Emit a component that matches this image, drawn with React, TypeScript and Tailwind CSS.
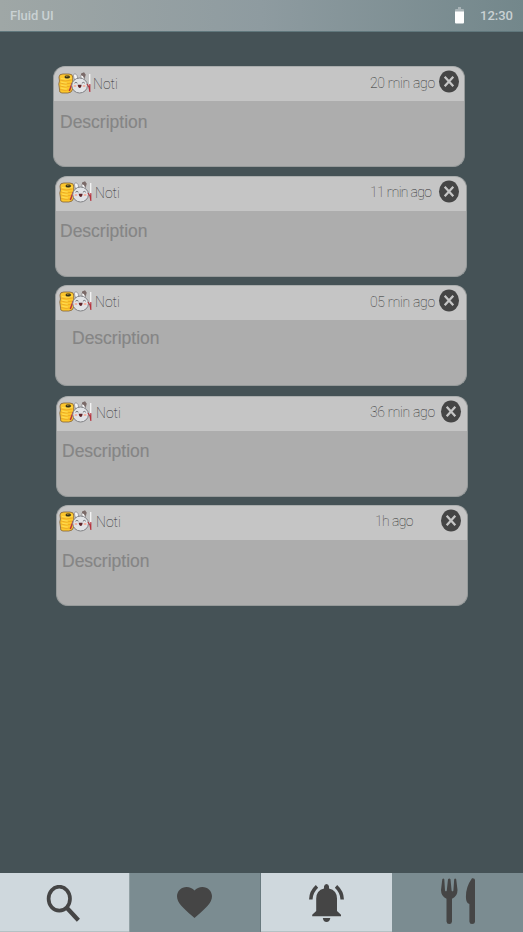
import React from "react";

type Notice = {
  card: string;
  icon: string;
  title: string;
  time: string;
  ago: string;
  close: string;
  body: string;
};

const notices: Notice[] = [
  { card: "ml-[53px]", icon: "ml-[4px] mt-[5px]", title: "ml-[2px] mt-[9px]", time: "ml-[250px] mt-[8px] w-[68px] tracking-[-0.3px]", ago: "20 min ago", close: "mt-[2px]", body: "pl-[6px] pt-[10px]" },
  { card: "ml-[55px] mt-[9px]", icon: "ml-[3px] mt-[4px]", title: "ml-[3px] mt-[8px]", time: "ml-[248px] mt-[7px] w-[68px] tracking-[-0.65px]", ago: "11 min ago", close: "mt-[2px]", body: "pl-[4px] pt-[9px]" },
  { card: "ml-[55px] mt-[8px]", icon: "ml-[3px] mt-[4px]", title: "ml-[3px] mt-[8px]", time: "ml-[248px] mt-[8px] w-[68px] tracking-[-0.3px]", ago: "05 min ago", close: "mt-[2px]", body: "pl-[16px] pt-[7px]" },
  { card: "ml-[56px] mt-[10px]", icon: "ml-[2px] mt-[4px]", title: "ml-[4px] mt-[8px]", time: "ml-[247px] mt-[7px] w-[70px] tracking-[-0.3px]", ago: "36 min ago", close: "mt-[2px]", body: "pl-[5px] pt-[9px]" },
  { card: "ml-[56px] mt-[8px]", icon: "ml-[2px] mt-[4px]", title: "ml-[4px] mt-[8px]", time: "ml-[252px] mt-[7px] w-[65px] tracking-[-0.6px]", ago: "1h ago", close: "mt-[2px]", body: "pl-[5px] pt-[10px]" },
];

function Sticker() {
  return (
    <svg width="33" height="23" viewBox="0 0 33.6 23" preserveAspectRatio="none">
      <path d="M1 5Q1 2 5 2H11Q15 2 15 5V17Q14 21 10 21H4Q1 21 1.5 17L.8 12 1.5 9Z" fill="#fdc72c" stroke="#80603a" strokeWidth=".8" />
      <path d="M2 8q5 2 12 0M2 11q5 2 12 0M2 14q5 2 12 0M2 17.5q5 2 11 0" fill="none" stroke="#e4a021" strokeWidth=".7" />
      <path d="M3 6.5q6 1.5 11-.5M3 10q3 1 6 1M3 13q3 1 6 1M3 16q3 1 6 1" fill="none" stroke="#ffe35e" strokeWidth=".8" />
      <ellipse cx="9.4" cy="4.9" rx="2.8" ry="1.7" fill="#343019" />
      <path d="M8 4.5l1.5-.5 1 .6" stroke="#e6b638" strokeWidth=".7" fill="none" />
      <path d="M14.5 11l-3 8" stroke="#ba3440" strokeWidth="1.5" />
      <path d="M17 8Q14.5 2 17.2 1.8Q19.8 2 20 7M24 7Q22 3 24 2.3Q28 1.5 27 7" fill="#f4f4f4" stroke="#86868a" strokeWidth=".7" />
      <path d="M23.5 1.5l3-1.3 1.8 2.5-1.5 4-1.5-2.7-2-.8z" fill="#7b6b69" />
      <ellipse cx="22" cy="13.5" rx="8" ry="7.5" fill="#e1e3e6" stroke="#808185" strokeWidth="1" />
      <path d="M16.8 11.2q1.5-1.7 3 0M24.3 11.2q1.5-1.7 3 0" stroke="#57575a" strokeWidth=".8" fill="none" />
      <ellipse cx="17.3" cy="14" rx="1.5" ry="1.1" fill="#f4ae9c" />
      <ellipse cx="26.6" cy="14" rx="1.5" ry="1.1" fill="#f4ae9c" />
      <path d="M20 12.7h4q-.3 3.2-2 3.3-1.7-.2-2-3.3z" fill="#61252b" />
      <path d="M32.3 2v11" stroke="#fafafa" strokeWidth="1.2" />
      <path d="M29.5 12l2 3 1 5M32.4 12v8" stroke="#b7323d" strokeWidth="1.1" fill="none" />
    </svg>
  );
}

function CloseIcon() {
  return (
    <svg width="22" height="24" viewBox="0 0 22 24">
      <ellipse cx="11" cy="12.5" rx="10" ry="11" fill="#454545" />
      <path d="M6.7 7.8l8.6 9.4M15.3 7.8l-8.6 9.4" stroke="#c5c5c5" strokeWidth="2.3" />
    </svg>
  );
}

function NoticeCard({ notice }: { notice: Notice }) {
  return (
    <article className={`h-[101px] w-[412px] shrink-0 overflow-hidden rounded-[12px] border border-[#969a9a] border-t-[#aaadad] bg-[#adadad] ${notice.card}`}>
      <header className="flex h-[34px] items-start bg-[#c5c5c5]">
        <span className={`w-[33px] shrink-0 ${notice.icon}`}><Sticker /></span>
        <span className={`w-[27px] shrink-0 whitespace-nowrap text-[14px] leading-[17px] font-thin text-[#303030] ${notice.title}`}>Noti</span>
        <time className={`shrink-0 whitespace-nowrap text-[14px] leading-[17px] font-thin text-[#303030] ${notice.time}`}>{notice.ago}</time>
        <button aria-label="Close" className={`shrink-0 ${notice.close}`}><CloseIcon /></button>
      </header>
      <p className={`font-['Liberation_Sans',Arial,sans-serif] text-[17.5px] leading-[23px] text-[#858585] [-webkit-text-stroke:0.15px_#858585] ${notice.body}`}>Description</p>
    </article>
  );
}

export default function App() {
  return (
    <div className="flex h-[932px] w-[523px] flex-col overflow-hidden bg-[#455256] font-[Roboto,sans-serif]">
      <header className="flex h-[32px] shrink-0 items-center border-b border-[#60777c] bg-linear-to-r from-[#9fa7a6] via-[#8e9ba0] to-[#73878b] pr-[10px] pl-[10px] text-[13px] font-medium text-[#c9d1d3]">
        <span className="pt-[1px]">Fluid UI</span>
        <svg className="ml-auto" width="9" height="17" viewBox="0 0 9 17">
          <path d="M3 0h3v2h2q1 0 1 1v3H0V3q0-1 1-1h2z" fill="#a8b3b6" />
          <path d="M0 4.5h9v11q0 1-1 1H1q-1 0-1-1z" fill="#ffffff" />
        </svg>
        <span className="ml-[16px] pt-[1px]">12:30</span>
      </header>
      <main className="flex flex-1 flex-col pt-[34px]">
        {notices.map((notice) => <NoticeCard key={notice.ago} notice={notice} />)}
      </main>
      <nav className="grid h-[59px] shrink-0 grid-cols-[129px_132px_131px_131px]">
        <button aria-label="Search" className="flex border-b border-[#b4c1c4] bg-[#cfd8dd] pt-[12px] pl-[46px]">
          <svg width="35" height="39" viewBox="0 0 35 39" fill="none" stroke="#454545">
            <ellipse cx="13.3" cy="13.7" rx="10.7" ry="12" strokeWidth="3.7" />
            <path d="M21 23L32.4 35.2" strokeWidth="4.3" />
          </svg>
        </button>
        <button aria-label="Favorites" className="flex border-x border-r-[#68797e] border-l-[#91a0a4] bg-[#7b8c91] pt-[14px] pl-[47px]">
          <svg width="35" height="31" viewBox="2 3 20 18.35" preserveAspectRatio="none" fill="#454545">
            <path d="M12 21.35l-1.45-1.32C5.4 15.36 2 12.28 2 8.5 2 5.42 4.42 3 7.5 3c1.74 0 3.41.81 4.5 2.09C13.09 3.81 14.76 3 16.5 3 19.58 3 22 5.42 22 8.5c0 3.78-3.4 6.86-8.55 11.54z" />
          </svg>
        </button>
        <button aria-label="Notifications" className="flex border-b border-[#b4c1c4] bg-[#cfd8dd] pt-[11px] pl-[48px]">
          <svg width="35" height="38" viewBox="0 0 35 38" fill="#454545">
            <path d="M1.8 15.5Q2 7.8 8 2.4M33.2 15.5Q33 7.8 27 2.4" fill="none" stroke="#454545" strokeWidth="3.5" />
            <path d="M15 4.4V2.5Q15.4 0 17.5 0Q19.7 0 20 2.5V4.4Q28 6.3 28 14.5V27L32 30.7V32.3H3.2V30.7L7.2 27V14.5Q7.2 6.3 15 4.4Z" />
            <path d="M13.8 34.1H21.3Q20.7 38 17.5 38Q14.4 38 13.8 34.1Z" />
          </svg>
        </button>
        <button aria-label="Restaurants" className="flex bg-[#7b8c91] pt-[5px] pl-[49px]">
          <svg width="34" height="47" viewBox="0 0 34 47" fill="#454545">
            <path d="M1.3 1.2Q2.3-.3 3.3 1.2L4 12.5Q5 14.2 5.8 12.5L7 1.2Q8.3-.3 9.5 1.2L10.6 12.5Q11.5 14.2 12.4 12.5L13.2 1.2Q14.2-.3 15.2 1.2L16.5 12Q16.5 18.5 11 20.7V43.5Q10.8 46 8.3 46Q5.7 46 5.5 43.5V20.7Q0 18.5 0 12Z" />
            <path d="M31 .3Q34 0 34 2V43.5Q33.8 46 31 46Q28.5 46 28.4 43.5V26Q25 25 24.9 19Q24.7 9 31 .3Z" />
          </svg>
        </button>
      </nav>
    </div>
  );
}
